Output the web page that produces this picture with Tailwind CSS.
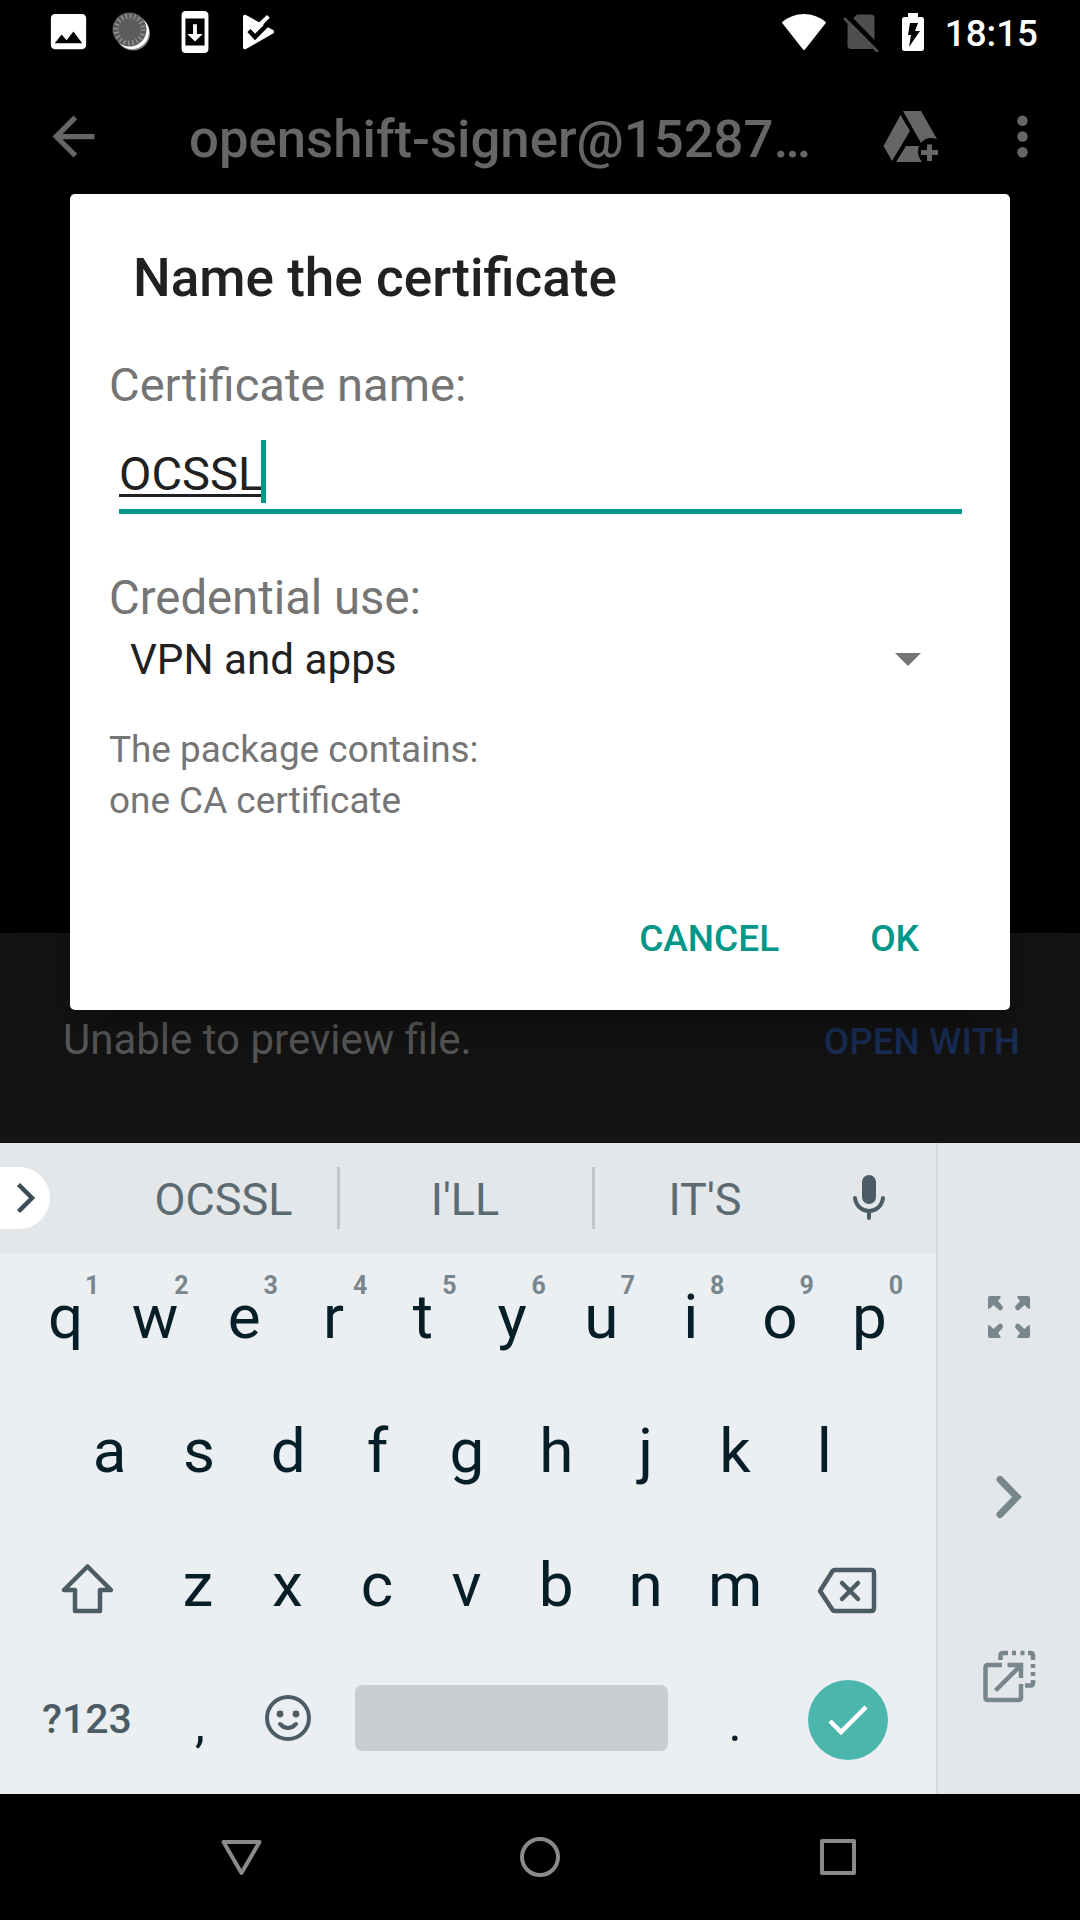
<!DOCTYPE html>
<html lang="en">
<head>
<meta charset="utf-8">
<title>Name the certificate</title>
<script src="https://cdn.jsdelivr.net/npm/@tailwindcss/browser@4"></script>
</head>
<body class="bg-black">
<div class="relative flex h-[1920px] w-[1080px] flex-col overflow-hidden bg-black font-['Roboto',sans-serif]">

  <!-- Status bar -->
  <header class="flex h-[63px] items-center justify-between pr-[42px] pl-[45px] text-white">
    <div class="flex items-center">
      <svg class="h-[47px] w-[47px]" viewBox="0 0 24 24" fill="currentColor"><path d="M21 19V5c0-1.100-.9-2-2-2H5c-1.100 0-2 .9-2 2v14c0 1.100.9 2 2 2h14c1.100 0 2-.9 2-2zM8.500 13.500l2.500 3.010L14.500 12l4.500 6H5l3.500-4.500z"/></svg>
      <svg class="ml-[18px] h-[42px] w-[42px]" viewBox="0 0 42 42"><circle cx="23" cy="22.500" r="17" fill="#888"/><circle cx="22" cy="21" r="17" fill="#fff"/><circle cx="19.500" cy="18.500" r="17" fill="#5c5c5c"/><circle cx="19.500" cy="18.500" r="13.500" fill="none" stroke="#999" stroke-width="5" stroke-dasharray="1.300 2.941"/></svg>
      <svg class="ml-[20px] h-[46px] w-[46px]" viewBox="0 0 24 24" fill="currentColor"><path fill-rule="evenodd" d="M17 1H7c-1.100 0-2 .9-2 2v18c0 1.100.9 2 2 2h10c1.100 0 2-.9 2-2V3c0-1.100-.9-2-2-2zM7 5h10v14H7z"/><path d="M16 13h-3V8h-2v5H8l4 4z"/></svg>
      <svg class="ml-[18px] h-[40px] w-[40px]" viewBox="0 0 40 40"><path fill="#fff" d="M7 5c0-2 1.500-2.800 3-2L37 18c1.500 1 1.500 2.500 0 3.500L10 37c-1.500.8-3 0-3-1.500z"/><path d="M23 10L38 1v12l4 3-10-3z" fill="#000"/><path d="M13 18.500l6 6.500L36 8" fill="none" stroke="#000" stroke-width="4.500"/><path fill="#fff" d="M17 14l6-3.500L31 3l2.800 2.800L18.800 21 15 17z"/></svg>
    </div>
    <div class="flex items-center">
      <svg class="h-[38px] w-[46px]" viewBox="0 0 46 38" fill="currentColor"><path d="M.8 9.500C7 4 15 1 23 1s16 3 22.200 8.500L24 36.500c-.6.700-1.400.7-2 0z"/></svg>
      <svg class="ml-[15px] h-[40px] w-[38px]" viewBox="0 0 38 40"><path fill="#4f4f4f" d="M15 2.500h14c2 0 3.500 1.500 3.500 3.500v27.500c0 2-1.500 3.500-3.500 3.500H9c-2 0-3.500-1.500-3.500-3.500V12z"/><path d="M3 1.500l34 34.500" stroke="#000" stroke-width="5"/><path d="M3 7l32 32" stroke="#4f4f4f" stroke-width="3" stroke-linecap="round"/></svg>
      <svg class="ml-[21px] h-[40px] w-[24px]" viewBox="0 0 24 40"><path fill="#fff" d="M7 1h10v4h3.500C22 5 23 6 23 7.500v29c0 1.500-1 2.500-2.500 2.500h-17C2 39 1 38 1 36.500v-29C1 6 2 5 3.500 5H7z"/><path d="M9 11h8l-3 8h5L8 35l2-12H7z"/></svg>
      <span class="ml-[20px] pt-[5px] text-[36.75px] leading-none font-medium">18:15</span>
    </div>
  </header>

  <!-- Viewer toolbar -->
  <div class="flex h-[147px] items-center pl-[42px] text-[#666]">
    <svg class="h-[63px] w-[63px]" viewBox="0 0 24 24" fill="currentColor"><path d="M20 11H7.830l5.590-5.590L12 4l-8 8 8 8 1.410-1.410L7.830 13H20v-2z"/></svg>
    <h1 class="ml-[84px] w-[640px] pt-[4px] text-[52.7px] leading-[62px] font-medium whitespace-nowrap">openshift-signer@15287…</h1>
    <svg class="ml-[53px] h-[56px] w-[60px]" viewBox="0 0 60 56" fill="currentColor"><path d="M21 2h18l16 28c-7-2-12-1-16 4zM18.500 6l9.500 16L10 52 1.500 37zM24 37h13c-2 6-1 11 3 16H14z"/><path d="M45 35.500h5v5.500h6v5h-6v6h-5v-6h-6v-5h6z"/></svg>
    <svg class="ml-[49px] h-[63px] w-[63px]" viewBox="0 0 24 24" fill="currentColor"><circle cx="12" cy="6" r="2"/><circle cx="12" cy="12" r="2"/><circle cx="12" cy="18" r="2"/></svg>
  </div>

  <div class="h-[723px]"></div>

  <!-- Snackbar -->
  <div class="flex h-[210px] items-center justify-between bg-[#141414] pt-[2px] pr-[60px] pl-[63px]">
    <span class="text-[42px] text-[#5b5b5b]">Unable to preview file.</span>
    <span class="pt-[5px] text-[36.9px] font-medium text-[#1a2f5a]">OPEN WITH</span>
  </div>

  <!-- Keyboard -->
  <section class="flex h-[651px] bg-[#e3e7ea]">
    <div class="flex w-[936px] flex-col">
      <div class="flex h-[110px] items-center text-[45px] text-[#5c6a71]">
        <div class="flex h-[62px] w-[50px] items-center rounded-r-full bg-white pl-[16px]">
          <svg class="h-[32px] w-[20px]" viewBox="0 0 20 32" fill="none" stroke="#3c4c55" stroke-width="4.500"><path d="M2.500 2.500L16 16 2.500 29.500"/></svg>
        </div>
        <span class="ml-[60px] w-[227px] pt-[4px] text-center">OCSSL</span>
        <i class="h-[62px] w-[3px] bg-[#c1c6c9]"></i>
        <span class="w-[252px] pt-[4px] pr-[2px] text-center">I'LL</span>
        <i class="h-[62px] w-[3px] bg-[#c1c6c9]"></i>
        <span class="w-[222px] pt-[4px] pr-[2px] text-center">IT'S</span>
        <svg class="ml-[34px] h-[48px] w-[36px]" viewBox="0 0 36 48" fill="none" stroke="#4b5c64" stroke-width="4" stroke-linecap="round"><rect x="11" y="1" width="14" height="29" rx="7" fill="#4b5c64" stroke="none"/><path d="M4 24c1 8 7 13 14 13s13-5 14-13M18 37v7"/></svg>
      </div>
      <div class="flex grow flex-col bg-[#ebeff2] text-[62px] leading-[72px] text-[#051e28]">
        <div id="row1" class="flex h-[134px] w-[914px] items-center pb-[6px] pl-[21px]"></div>
        <div id="row2" class="flex h-[134px] w-[869px] items-center pb-[6px] pl-[65px]"></div>
        <div class="flex h-[134px] items-center pb-[6px] pl-[60px]">
          <svg class="mt-[8px] h-[54px] w-[56px]" viewBox="0 0 56 54" fill="none" stroke="#4b5c64" stroke-width="4.500" stroke-linejoin="round"><path d="M27.500 4.500L51 28H40V49H15V28H4z"/></svg>
          <div id="row3" class="ml-[37px] flex w-[627px]"></div>
          <svg class="mt-[12px] ml-[36px] h-[50px] w-[62px]" viewBox="0 0 62 50" fill="none" stroke="#4b5c64" stroke-width="4.500" stroke-linejoin="round" stroke-linecap="round"><path d="M19 4h36q3 0 3 3v35q0 3-3 3H19q-2 0-3-2L4 25 16 6q1-2 3-2zM26 17l16 16M42 17L26 33"/></svg>
        </div>
        <div class="flex h-[134px] items-center pb-[6px] text-[#4b5c64]">
          <span class="w-[174px] text-center text-[41px] font-medium">?123</span>
          <span class="w-[52px] pt-[9px] text-center text-[50px] text-[#051e28]">,</span>
          <svg class="-mt-[2px] ml-[38px] h-[48px] w-[48px]" viewBox="0 0 48 48" fill="none" stroke="currentColor" stroke-width="4" stroke-linecap="round"><circle cx="24" cy="24" r="21"/><circle cx="16" cy="20" r="3.400" fill="currentColor" stroke="none"/><circle cx="32" cy="20" r="3.400" fill="currentColor" stroke="none"/><path d="M16 30q8 8 16 0"/></svg>
          <div class="-mt-[2px] ml-[43px] h-[66px] w-[313px] rounded-[7px] bg-[#c9ced1]"></div>
          <span class="ml-[42px] w-[50px] pt-[9px] text-center text-[50px] text-[#051e28]">.</span>
          <div class="mt-[2px] ml-[48px] flex h-[80px] w-[80px] items-center justify-center rounded-full bg-[#4db6ac]">
            <svg class="h-[34px] w-[42px]" viewBox="0 0 42 34" fill="none" stroke="#fff" stroke-width="4.500"><path d="M3 18l11 11L39 4"/></svg>
          </div>
        </div>
      </div>
    </div>
    <!-- One-handed mode controls -->
    <div class="flex grow flex-col items-center border-l-2 border-[#d4d9dc] pt-[150px] text-[#78868d]">
      <svg class="h-[48px] w-[48px]" viewBox="0 0 48 48" fill="currentColor"><g id="corner"><path d="M5 3h10q1.500 1 0 2.500L13 8l4.500 5q1 2-.5 3.500T14 17l-5.500-5L6 14.500Q4.500 16.500 3 15.500V5q0-2 2-2z"/></g><use href="#corner" transform="matrix(-1 0 0 1 48 0)"/><use href="#corner" transform="matrix(1 0 0 -1 0 48)"/><use href="#corner" transform="matrix(-1 0 0 -1 48 48)"/></svg>
      <svg class="mt-[132px] h-[48px] w-[30px]" viewBox="0 0 30 48" fill="none" stroke="currentColor" stroke-width="7" stroke-linecap="round"><path d="M6 6.500L23 24 6 41.500"/></svg>
      <svg class="mt-[127px] h-[58px] w-[58px]" viewBox="0 0 58 58" fill="none" stroke="currentColor" stroke-width="4.500"><path d="M22 17H8q-2.500 0-2.500 2.500v30q0 2.500 2.500 2.500h30.500q2.500 0 2.500-2.500V36M15.500 42.500l24-24M27.500 17H41v13"/><path d="M35 15h8v9z" fill="currentColor" stroke="none"/><path d="M20.500 12V7.500Q20.500 5 23 5h5M32 5h4M40.500 5h4M48 5h2.500Q53 5 53 7.500V12M53 16v4M53 24v4M53 32v3q0 2.500-2.500 2.500H45"/></svg>
    </div>
  </section>

  <!-- Navigation bar -->
  <nav class="flex grow items-center justify-center gap-[252px] text-[#8a8a8a]">
    <svg class="h-[46px] w-[46px]" viewBox="0 0 46 46" fill="none" stroke="currentColor" stroke-width="4" stroke-linejoin="round"><path d="M4.500 8h36l-18 31z"/></svg>
    <svg class="h-[46px] w-[46px]" viewBox="0 0 46 46" fill="none" stroke="currentColor" stroke-width="4"><circle cx="23" cy="23" r="18"/></svg>
    <svg class="h-[46px] w-[46px]" viewBox="0 0 46 46" fill="none" stroke="currentColor" stroke-width="4" stroke-linejoin="round"><path d="M7 7h32v32H7z"/></svg>
  </nav>

  <!-- Dialog -->
  <div class="absolute top-[194px] left-[70px] flex h-[816px] w-[940px] flex-col rounded-[5px] bg-white px-[39px] pt-[53px] shadow-[0_20px_50px_rgba(0,0,0,0.35)]">
    <h2 class="ml-[24px] text-[53.1px] leading-[62px] font-medium text-[#212121]">Name the certificate</h2>
    <label class="mt-[48px] text-[47.1px] leading-[56px] text-[#757575]">Certificate name:</label>
    <div class="mt-[27px] mr-[9px] ml-[10px] flex h-[74px] items-start border-b-[5px] border-[#009688]">
      <span class="pt-px text-[47.1px] leading-[66px] text-[#212121] underline decoration-[3px] underline-offset-[4px] [text-decoration-skip-ink:none]">OCSSL</span>
      <i class="-ml-[2px] h-[63px] w-[5px] bg-[#009688]"></i>
    </div>
    <label class="mt-[56px] text-[47.25px] leading-[56px] text-[#757575]">Credential use:</label>
    <div class="flex h-[68px] items-center justify-between pr-[50px] pl-[21px] text-[42.2px] text-[#212121]">
      <span>VPN and apps</span>
      <svg class="-mt-[2px] h-[13px] w-[26px]" viewBox="0 0 26 13" fill="#757575"><path d="M0 0h26L13 13z"/></svg>
    </div>
    <p class="mt-[30px] text-[36.9px] leading-[51px] text-[#757575]">The package contains:<br>one CA certificate</p>
    <div class="mt-[50px] flex h-[126px] items-center justify-end gap-[91px] pr-[52px] text-[37px] font-medium text-[#009688]">
      <span>CANCEL</span><span>OK</span>
    </div>
  </div>
</div>

<script>
  // Fill the three letter rows of the keyboard.
  const rows = { row1: "qwertyuiop", row2: "asdfghjkl", row3: "zxcvbnm" };
  for (const [id, letters] of Object.entries(rows)) {
    document.getElementById(id).innerHTML = [...letters].map((c, i) =>
      `<div class="relative flex-1 text-center">${c}${id === "row1"
        ? `<span class="absolute -top-[10px] left-[64px] text-[25px] leading-[30px] font-bold text-[#78868d]">${(i + 1) % 10}</span>` : ""}</div>`).join("");
  }
</script>
</body>
</html>
